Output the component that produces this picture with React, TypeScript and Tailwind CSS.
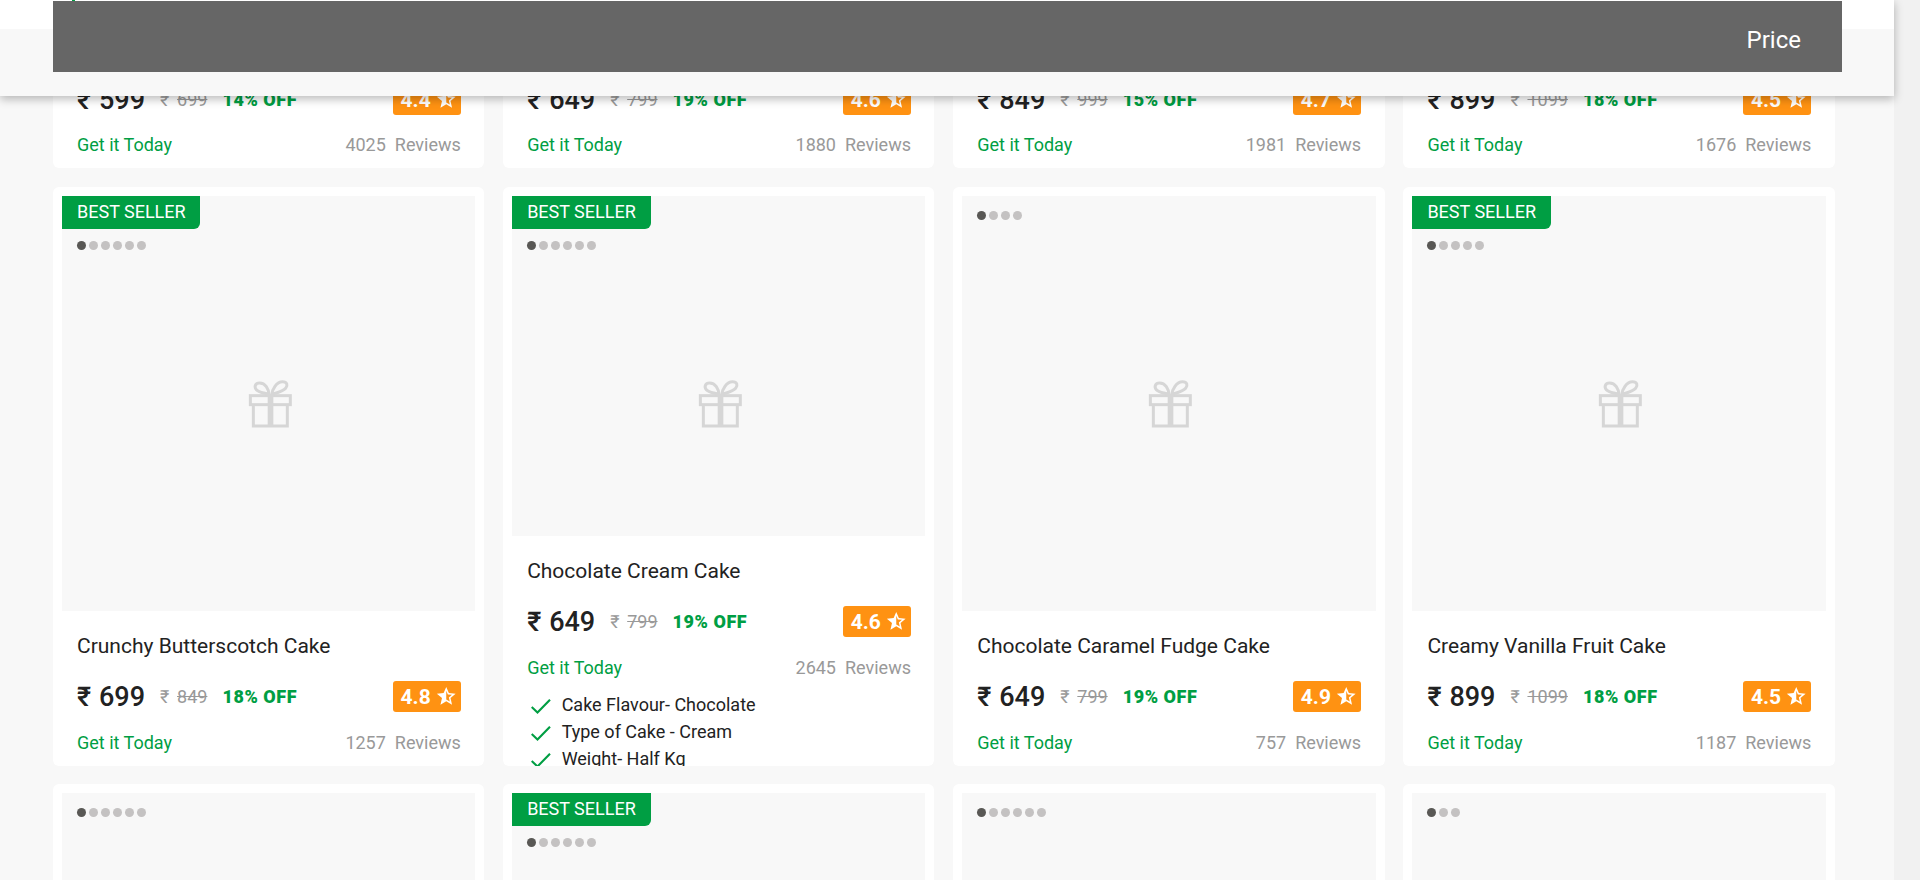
import React from "react";
import { MdStarHalf } from "react-icons/md";

type Product = {
  name: string;
  price: number;
  mrp: number;
  off: number;
  rating: string;
  reviews: number;
  dots: number;
  bestSeller?: boolean;
  features?: string[];
};

const products: Product[] = [
  { name: "Chocolate Truffle Cake", price: 599, mrp: 699, off: 14, rating: "4.4", reviews: 4025, dots: 5 },
  { name: "Black Forest Cake", price: 649, mrp: 799, off: 19, rating: "4.6", reviews: 1880, dots: 5 },
  { name: "Red Velvet Cake", price: 849, mrp: 999, off: 15, rating: "4.7", reviews: 1981, dots: 5 },
  { name: "Fresh Fruit Cake", price: 899, mrp: 1099, off: 18, rating: "4.5", reviews: 1676, dots: 5 },
  { name: "Crunchy Butterscotch Cake", price: 699, mrp: 849, off: 18, rating: "4.8", reviews: 1257, dots: 6, bestSeller: true },
  {
    name: "Chocolate Cream Cake",
    price: 649,
    mrp: 799,
    off: 19,
    rating: "4.6",
    reviews: 2645,
    dots: 6,
    bestSeller: true,
    features: ["Cake Flavour- Chocolate", "Type of Cake - Cream", "Weight- Half Kg"],
  },
  { name: "Chocolate Caramel Fudge Cake", price: 649, mrp: 799, off: 19, rating: "4.9", reviews: 757, dots: 4 },
  { name: "Creamy Vanilla Fruit Cake", price: 899, mrp: 1099, off: 18, rating: "4.5", reviews: 1187, dots: 5, bestSeller: true },
  { name: "Pineapple Cake", price: 599, mrp: 699, off: 14, rating: "4.7", reviews: 940, dots: 6 },
  { name: "Mango Cake", price: 649, mrp: 799, off: 19, rating: "4.6", reviews: 812, dots: 6, bestSeller: true },
  { name: "Vanilla Cake", price: 649, mrp: 799, off: 19, rating: "4.5", reviews: 655, dots: 6 },
  { name: "Coffee Cake", price: 749, mrp: 899, off: 17, rating: "4.6", reviews: 430, dots: 3 },
];

function GiftIcon() {
  return (
    <svg
      viewBox="84 56 134 148"
      className="absolute left-[186px] top-[182.7px] h-[49.3px] w-[44.7px]"
      fill="none"
      stroke="#d6d6d6"
      strokeWidth="9"
    >
      <rect x="91" y="106" width="120" height="27" />
      <path d="M100 133V197H202V133" />
      <path d="M151.500 104V199" strokeWidth="17" />
      <path d="M147 103C146 86 136 68 119 68C105 68 102 80 109 88C117 97 132 97 147 103Z" />
      <path d="M155 103C157 86 170 64 187 64C202 64 204 76 197 84C187 95 170 96 155 103Z" />
    </svg>
  );
}

function CheckIcon() {
  return (
    <svg viewBox="0 0 20 15" className="mt-[8.5px] h-[15px] w-5 shrink-0" fill="none" stroke="#009e43" strokeWidth="2.1">
      <path d="M0.700 8L6.500 13.500L19 0.700" />
    </svg>
  );
}

function Card({ p }: { p: Product }) {
  return (
    <article className="relative h-[578.75px] overflow-hidden rounded-[6px] bg-white p-[9px]">
      <div className="relative h-[415px] bg-[#f8f8f8]">
        {p.bestSeller && (
          <div className="mb-3 h-[33px] w-[138.4px] rounded-br-[6px] bg-[#009e43] pl-[15px] text-[18px] leading-[32px] text-white">
            BEST SELLER
          </div>
        )}
        <div className={p.bestSeller ? "flex gap-[3px] pl-[15px]" : "flex gap-[3px] pl-[15px] pt-[15px]"}>
          {Array.from({ length: p.dots }, (_, i) => (
            <span
              key={i}
              className={i === 0 ? "size-[9px] rounded-full bg-[#595855]" : "size-[9px] rounded-full bg-[#c4c2c2]"}
            />
          ))}
        </div>
        <GiftIcon />
      </div>
      <div
        className={
          p.features
            ? "relative -mt-[75px] bg-white pl-[15px] pr-[14.5px] pt-[19px]"
            : "pl-[15px] pr-[14.5px] pt-[19px]"
        }
      >
        <h3 className="h-8 whitespace-nowrap text-[21px] leading-8 text-[#222]">{p.name}</h3>
        <div className="mt-[19.3px] flex h-[31px] items-center">
          <span className="w-[22px] pt-[2px] text-[27px] font-medium leading-[31px] text-[#222]">₹</span>
          <span className="pt-[2px] text-[27px] font-medium leading-[31px] text-[#222]">{p.price}</span>
          <span className="ml-[15px] w-[17px] text-[18px] text-[#999]">₹</span>
          <span className="text-[18px] text-[#999] line-through">{p.mrp}</span>
          <span className="ml-[15px] text-[18px] font-black tracking-[0.55px] text-[#009e43]">{p.off}% OFF</span>
          <span className="ml-auto flex h-[31px] w-[68px] items-center rounded-[3px] bg-[#ff9212] pl-[7.7px] font-bold text-white">
            <span className="w-[29.3px] pt-[2px] text-[21px] leading-[31px]">{p.rating}</span>
            <MdStarHalf className="ml-[5px] size-[22.5px] shrink-0" />
          </span>
        </div>
        <div className="mt-[16.4px] flex justify-between text-[18px] leading-[27px]">
          <span className="text-[#009e43]">Get it Today</span>
          <span className="flex gap-[9px] text-[#999]">
            <span>{p.reviews}</span>
            <span>Reviews</span>
          </span>
        </div>
        {p.features && (
          <ul className="mt-[10px] text-[18px] leading-[27px] text-[#222]">
            {p.features.map((f) => (
              <li key={f} className="flex gap-[10.5px] pl-1">
                <CheckIcon />
                {f}
              </li>
            ))}
          </ul>
        )}
      </div>
    </article>
  );
}

export default function App() {
  return (
    <div
      className="relative flex h-[880px] w-[1920px] overflow-hidden bg-[#f1f1f1]"
      style={{ fontFamily: 'Roboto, "Noto Sans", sans-serif' }}
    >
      <main className="h-[880px] w-[1894px] overflow-hidden bg-[#f8f8f8]">
        <div className="-mt-[410.6px] ml-[53px] grid w-[1781.75px] grid-cols-4 gap-x-[18.8px] gap-y-[18.75px]">
          {products.map((p) => (
            <Card key={p.name} p={p} />
          ))}
        </div>
      </main>
      <header className="absolute left-0 top-0 h-24 w-[1894px] bg-[#f8f8f8] shadow-[0_3px_9px_rgba(0,0,0,0.28)]">
        <div className="h-[29px] bg-white">
          <div className="ml-[72px] h-px w-[3px] bg-[#009e43]" />
          <div className="ml-[53px] flex h-[71px] w-[1789px] items-center justify-end bg-[#666] pr-[41px] text-[24px] text-white">
            <span className="pt-[7px]">Price</span>
          </div>
        </div>
      </header>
    </div>
  );
}
